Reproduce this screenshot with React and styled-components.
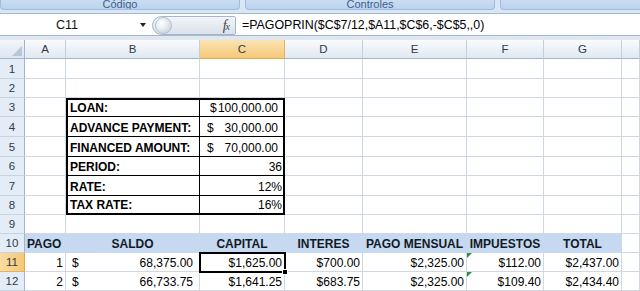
import React from 'react';
import styled, { createGlobalStyle } from 'styled-components';

const GlobalStyle = createGlobalStyle`
  html, body { margin: 0; padding: 0; background: #fff; }
  body { font-family: "Liberation Sans", Arial, sans-serif; }
`;

const Window = styled.div`
  width: 640px;
  height: 291px;
  overflow: hidden;
  display: flex;
  flex-direction: column;
  background: #fff;
`;

/* ---------- ribbon strip ---------- */
const Ribbon = styled.div`
  flex: none;
  height: 14px;
  box-sizing: border-box;
  display: flex;
  align-items: flex-start;
  gap: 5px;
  background: #d9e6f5;
  border-bottom: 1px solid #a3b8d3;
  overflow: hidden;
`;

const RibbonGroup = styled.div`
  flex: none;
  width: ${p => p.$w}px;
  height: 10px;
  box-sizing: border-box;
  background: linear-gradient(#c9dcf2, #bdd3ed);
  border: 1px solid #a2bbdb;
  border-top: none;
  border-radius: 0 0 4px 4px;
  color: #3e5f8d;
  font-size: 11px;
  line-height: 8px;
  text-align: center;
  padding-left: ${p => p.$pad || 0}px;
  overflow: hidden;
  white-space: nowrap;
`;

/* ---------- formula bar ---------- */
const FormulaBar = styled.div`
  flex: none;
  height: 22px;
  box-sizing: border-box;
  display: flex;
  align-items: stretch;
  background: #fff;
  border-bottom: 1px solid #a9b9cd;
`;

const NameField = styled.div`
  flex: none;
  width: 134px;
  display: flex;
  align-items: center;
  justify-content: center;
  font-size: 12.5px;
  color: #111;
`;

const NameArrow = styled.div`
  flex: none;
  width: 18px;
  display: flex;
  align-items: center;
  justify-content: center;
  &::after {
    content: '';
    border-left: 3px solid transparent;
    border-right: 3px solid transparent;
    border-top: 4px solid #222;
  }
`;

const FxPill = styled.div`
  flex: none;
  width: 84px;
  margin: 2px 0 0 0;
  box-sizing: border-box;
  display: flex;
  align-items: center;
  justify-content: space-between;
  padding: 0 6px 0 2px;
  background: linear-gradient(#f3f6fa, #d9e1eb);
  border: 1px solid #a6b5c8;
  border-radius: 10px 2px 2px 10px;
`;

const Orb = styled.span`
  width: 15px;
  height: 15px;
  border-radius: 50%;
  background: radial-gradient(circle at 35% 35%, #ffffff 0%, #e6ebf1 45%, #b9c4d2 100%);
  border: 1px solid #b3bfcd;
`;

const FxLabel = styled.span`
  font-family: "Liberation Serif", "Times New Roman", serif;
  font-style: italic;
  font-size: 14px;
  color: #444;
  letter-spacing: -1px;
  & small { font-size: 10px; }
`;

const FormulaText = styled.div`
  flex: 1;
  display: flex;
  align-items: center;
  padding-left: 6px;
  font-size: 12.4px;
  color: #000;
  white-space: nowrap;
`;

const Gap = styled.div`
  flex: none;
  height: 4px;
  background: #dfe7f1;
`;

/* ---------- sheet ---------- */
const Sheet = styled.div`
  flex: none;
  display: grid;
  grid-template-columns: 25px 41px 134px 85px 78px 104px 77px 78px 1fr;
  grid-template-rows: 19px 20px 19px 19px 20px 20px 19px 20px 19px 19px 19px 19px 19px;
`;

const Corner = styled.div`
  grid-column: 1;
  grid-row: 1;
  box-sizing: border-box;
  background: linear-gradient(#f3f6fa, #dde5ef);
  border-right: 1px solid #9eb6ce;
  border-bottom: 1px solid #9eb6ce;
  display: flex;
  align-items: flex-end;
  justify-content: flex-end;
  padding: 0 2px 2px 0;
  &::after {
    content: '';
    border-left: 10px solid transparent;
    border-bottom: 10px solid #b8c6d6;
  }
`;

const ColHeader = styled.div`
  grid-column: ${p => p.$c};
  grid-row: 1;
  box-sizing: border-box;
  background: ${p => p.$active
    ? 'linear-gradient(#fbe3b5, #f5c978)'
    : 'linear-gradient(#f9fbfd, #e1e8f1)'};
  border-right: 1px solid ${p => p.$active ? '#e6b25c' : '#c5cfdc'};
  border-bottom: 1px solid ${p => p.$active ? '#e0a84d' : '#9eb6ce'};
  display: flex;
  align-items: center;
  justify-content: center;
  font-size: 11.5px;
  color: #303a48;
`;

const RowHeader = styled.div`
  grid-column: 1;
  grid-row: ${p => p.$r};
  box-sizing: border-box;
  background: ${p => p.$active ? 'linear-gradient(90deg, #fbdba0, #f6c877)' : '#e4ecf7'};
  border-right: 1px solid ${p => p.$active ? '#e0a84d' : '#9eb6ce'};
  border-bottom: 1px solid ${p => p.$active ? '#e6b25c' : '#c7d3e2'};
  display: flex;
  align-items: center;
  justify-content: center;
  font-size: 11.5px;
  color: #303a48;
`;

const Cell = styled.div`
  grid-column: ${p => p.$c};
  grid-row: ${p => p.$r};
  position: relative;
  box-sizing: border-box;
  min-width: 0;
  background: ${p => p.$fill || '#fff'};
  border-right: 1px solid ${p => p.$fill || '#d0d7e5'};
  border-bottom: 1px solid ${p => p.$fill || '#d0d7e5'};
  display: flex;
  align-items: flex-end;
  justify-content: ${p => ({ right: 'flex-end', center: 'center', split: 'space-between' }[p.$align] || 'flex-start')};
  padding: ${p => (p.$align === 'split' ? '0 6px 0 6px' : '0 2px')};
  font-size: 12px;
  line-height: 15px;
  font-weight: ${p => (p.$bold ? 700 : 400)};
  color: ${p => (p.$bold ? '#121a26' : '#000')};
  white-space: nowrap;
`;

const ErrorMark = styled.span`
  position: absolute;
  left: 0;
  top: 0;
  width: 0;
  height: 0;
  border-top: 5px solid #2f8f3c;
  border-right: 5px solid transparent;
`;

const TableBox = styled.div`
  grid-column: 3 / 5;
  grid-row: 4 / 10;
  z-index: 1;
  box-sizing: border-box;
  background: #fff;
  border: 2px solid #000;
  display: grid;
  grid-template-columns: 132px 1fr;
  grid-template-rows: 17px 20px 20px 19px 20px 17px;
`;

const TableCell = styled.div`
  box-sizing: border-box;
  border-bottom: ${p => (p.$last ? 'none' : '1px solid #000')};
  border-right: ${p => (p.$label ? '1px solid #000' : 'none')};
  display: flex;
  align-items: flex-end;
  justify-content: ${p => (p.$acct ? 'space-between' : p.$label ? 'flex-start' : 'flex-end')};
  padding: ${p => (p.$acct ? `0 5px 0 ${p.$lead || 7}px` : p.$label ? '0 0 0 2px' : '0 1px 0 0')};
  font-size: 12px;
  line-height: 15px;
  font-weight: ${p => (p.$label ? 700 : 400)};
  color: #000;
  white-space: nowrap;
`;

const Selection = styled.div`
  grid-column: 4;
  grid-row: 12;
  z-index: 2;
  margin: -1px -1px -1px -1px;
  position: relative;
  border: 2px solid #000;
  pointer-events: none;
`;

const Handle = styled.span`
  position: absolute;
  right: -4px;
  bottom: -4px;
  width: 4px;
  height: 4px;
  background: #000;
  border: 1px solid #fff;
`;

const COLS = ['A', 'B', 'C', 'D', 'E', 'F', 'G', 'H'];
const BLUE = '#c6d9f0';

const acct = (n) => ({ split: ['$', n] });
const R = (t) => ({ t, a: 'right' });

const rows = {
  10: [
    { t: 'PAGO', b: true },
    { t: 'SALDO', b: true, a: 'center' },
    { t: 'CAPITAL', b: true, a: 'center' },
    { t: 'INTERES', b: true, a: 'center' },
    { t: 'PAGO MENSUAL', b: true, a: 'center' },
    { t: 'IMPUESTOS', b: true, a: 'center' },
    { t: 'TOTAL', b: true, a: 'center' },
    null,
  ],
  11: [R('1'), acct('68,375.00'), R('$1,625.00'), R('$700.00'), R('$2,325.00'), { ...R('$112.00'), err: true }, R('$2,437.00'), null],
  12: [R('2'), acct('66,733.75'), R('$1,641.25'), R('$683.75'), R('$2,325.00'), { ...R('$109.40'), err: true }, R('$2,434.40'), null],
};

const table = [
  ['LOAN:', { acct: ['$', '100,000.00'], lead: 10 }],
  ['ADVANCE PAYMENT:', { acct: ['$', '30,000.00'] }],
  ['FINANCED AMOUNT:', { acct: ['$', '70,000.00'] }],
  ['PERIOD:', { t: '36' }],
  ['RATE:', { t: '12%' }],
  ['TAX RATE:', { t: '16%' }],
];

export default function App() {
  const cells = [];
  for (let r = 1; r <= 12; r++) {
    const data = rows[r];
    COLS.forEach((_, i) => {
      const col = i + 2;
      if (r >= 3 && r <= 8 && (i === 1 || i === 2)) return;
      const d = data ? data[i] : null;
      const fill = r === 10 && i < 7 ? BLUE : undefined;
      let content = null;
      let align = d ? d.a : undefined;
      if (d && d.split) {
        align = 'split';
        content = (
          <>
            <span>{d.split[0]}</span>
            <span>{d.split[1]}</span>
          </>
        );
      } else if (d) {
        content = d.t;
      }
      cells.push(
        <Cell key={`${r}-${i}`} $r={r + 1} $c={col} $fill={fill} $align={align} $bold={d && d.b}>
          {d && d.err && <ErrorMark />}
          {content}
        </Cell>
      );
    });
  }

  return (
    <Window>
      <GlobalStyle />
      <Ribbon>
        <RibbonGroup $w={240}>Código</RibbonGroup>
        <RibbonGroup $w={250}>Controles</RibbonGroup>
        <RibbonGroup $w={290} $pad={265}>XML</RibbonGroup>
      </Ribbon>
      <FormulaBar>
        <NameField>C11</NameField>
        <NameArrow />
        <FxPill>
          <Orb />
          <FxLabel>f<small>x</small></FxLabel>
        </FxPill>
        <FormulaText>=PAGOPRIN($C$7/12,$A11,$C$6,-$C$5,,0)</FormulaText>
      </FormulaBar>
      <Gap />
      <Sheet>
        <Corner />
        {COLS.map((c, i) => (
          <ColHeader key={c} $c={i + 2} $active={c === 'C'}>{c === 'H' ? '' : c}</ColHeader>
        ))}
        {Array.from({ length: 12 }, (_, k) => (
          <RowHeader key={k} $r={k + 2} $active={k + 1 === 11}>{k + 1}</RowHeader>
        ))}
        {cells}
        <TableBox>
          {table.map(([label, v], k) => (
            <React.Fragment key={label}>
              <TableCell $label $last={k === table.length - 1}>{label}</TableCell>
              {v.acct ? (
                <TableCell $acct $lead={v.lead} $last={k === table.length - 1}>
                  <span>{v.acct[0]}</span>
                  <span>{v.acct[1]}</span>
                </TableCell>
              ) : (
                <TableCell $last={k === table.length - 1}>{v.t}</TableCell>
              )}
            </React.Fragment>
          ))}
        </TableBox>
        <Selection>
          <Handle />
        </Selection>
      </Sheet>
    </Window>
  );
}
